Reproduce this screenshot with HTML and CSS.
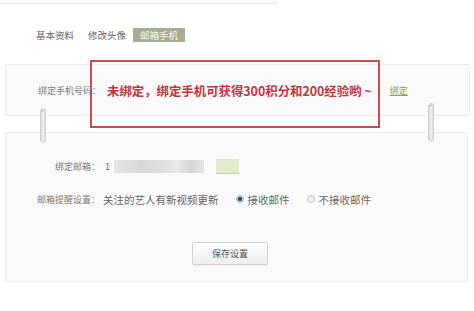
FILE: index.html
```html
<!DOCTYPE html>
<html lang="zh-CN">
<head>
<meta charset="utf-8">
<title>邮箱手机</title>
<link rel="stylesheet" href="styles.css">
</head>
<body>
<div class="topbar"></div>
<div class="tabs">
  <span class="tab">基本资料</span>
  <span class="tab">修改头像</span>
  <span class="tab active">邮箱手机</span>
</div>
<div class="sheet">
  <div class="panel phone">
    <span class="label">绑定手机号码：</span>
    <span class="notice">未绑定，绑定手机可获得300积分和200经验哟 ~</span>
    <a class="bind" href="#">绑定</a>
    <div class="callout"></div>
  </div>
  <div class="hook hook-left">
    <svg width="8" height="36" viewBox="0 0 8 36"><defs><linearGradient id="hg1" x1="0" x2="1" y1="0" y2="0"><stop offset="0" stop-color="#cfcfcf"/><stop offset="0.5" stop-color="#f2f2f2"/><stop offset="1" stop-color="#d6d6d6"/></linearGradient></defs><path d="M1.5 6 Q1.5 1.5 4 1.5 Q6.5 1.5 6.5 4 L6.5 33 Q6.5 35 4 35 Q1.5 35 1.5 33 Z" fill="url(#hg1)" stroke="#c9c9c9" stroke-width="0.8"/><path d="M2.5 5 Q3 2.5 5 3" fill="none" stroke="#aaa" stroke-width="0.8"/></svg>
  </div>
  <div class="hook hook-right">
    <svg width="8" height="40" viewBox="0 0 8 40"><defs><linearGradient id="hg2" x1="0" x2="1" y1="0" y2="0"><stop offset="0" stop-color="#cfcfcf"/><stop offset="0.5" stop-color="#f2f2f2"/><stop offset="1" stop-color="#d6d6d6"/></linearGradient></defs><path d="M1.5 6 Q1.5 1.5 4 1.5 Q6.5 1.5 6.5 4 L6.5 37 Q6.5 39 4 39 Q1.5 39 1.5 37 Z" fill="url(#hg2)" stroke="#c9c9c9" stroke-width="0.8"/><path d="M2.5 5 Q3 2.5 5 3" fill="none" stroke="#aaa" stroke-width="0.8"/></svg>
  </div>
  <div class="panel settings">
    <div class="row email-row">
      <span class="label">绑定邮箱：</span>
      <span class="email"><span class="email-first">1</span><span class="email-blur"></span></span>
      <span class="mini-btn"></span>
    </div>
    <div class="row remind-row">
      <span class="label">邮箱提醒设置：</span>
      <span class="text">关注的艺人有新视频更新</span>
      <span class="radio checked"></span><span class="text opt">接收邮件</span>
      <span class="radio"></span><span class="text opt">不接收邮件</span>
    </div>
    <div class="btn-row">
      <button class="save">保存设置</button>
    </div>
  </div>
</div>
</body>
</html>
```
FILE: styles.css
```css
html, body {
  margin: 0;
  padding: 0;
  background: #ffffff;
  font-family: "Noto Sans CJK SC", "Noto Sans", sans-serif;
  color: #555;
}

.topbar {
  width: 275px;
  height: 3px;
  background: #fafafa;
  border-bottom: 1px solid #e8e8e8;
  border-right: 1px solid #ececec;
}

.tabs {
  display: flex;
  margin-top: 24px;
  padding-left: 29px;
  height: 14px;
}

.tab {
  padding: 0 7px;
  font-size: 9.5px;
  line-height: 14px;
  color: #666;
}

.tab.active {
  background: #a5ad92;
  color: #f4f6ee;
}

.sheet {
  position: relative;
  margin-top: 22px;
}

.panel {
  margin-left: 5px;
  width: 463px;
  background: #fafafa;
  border: 1px solid #ededed;
}

.phone {
  position: relative;
  height: 50px;
  display: flex;
  align-items: center;
  padding-left: 32px;
  box-sizing: content-box;
  width: 431px;
}

.label {
  font-size: 9px;
  color: #7a7a7a;
  white-space: nowrap;
}

.notice {
  margin-left: 6px;
  font-size: 12.4px;
  font-weight: bold;
  color: #c4343d;
  white-space: nowrap;
  position: relative;
  top: 1px;
}

.bind {
  margin-left: 18px;
  font-size: 9px;
  color: #8ea24a;
  text-decoration: underline;
}

.callout {
  position: absolute;
  left: 84px;
  top: -5px;
  width: 290px;
  height: 68px;
  box-sizing: border-box;
  border: 2px solid #c84a52;
}

.hook {
  position: absolute;
  line-height: 0;
}

.hook-left {
  left: 39px;
  top: 43px;
}

.hook-right {
  left: 427px;
  top: 38px;
}

.settings {
  margin-top: 16px;
  height: 148px;
  padding-top: 25px;
  box-sizing: border-box;
  height: 150px;
}

.row {
  display: flex;
  align-items: center;
}

.row .label {
  width: 94px;
  text-align: right;
  flex: none;
}

.email-row {
  height: 16px;
}

.email {
  display: flex;
  align-items: center;
  margin-left: 5px;
}

.email-first {
  font-size: 9px;
  color: #666;
  width: 9px;
}

.email-blur {
  width: 90px;
  height: 13px;
  background: linear-gradient(90deg, #e4e4e4 0%, #d8d8d8 30%, #dedede 55%, #e9e9e9 70%, #d4d4d4 85%, #e6e6e6 100%);
  filter: blur(0.6px);
}

.mini-btn {
  margin-left: 12px;
  width: 23px;
  height: 14px;
  background: #e4ebcc;
  border-bottom: 1px solid #c6d19e;
}

.remind-row {
  margin-top: 17px;
  height: 16px;
}

.text {
  font-size: 10.5px;
  color: #666;
  margin-left: 3px;
  white-space: nowrap;
}

.radio {
  display: inline-block;
  width: 6px;
  height: 6px;
  border-radius: 50%;
  border: 1px solid #c4c4c4;
  background: #f0f0f0;
  margin-left: 17px;
  flex: none;
}

.radio.checked {
  border-color: #9fb4cc;
  background: radial-gradient(circle, #2e4a6a 0 45%, #c9d6e6 55%);
}

.radio + .opt {
  margin-left: 4px;
}

.remind-row .radio:nth-of-type(2) {
  margin-left: 14px;
}

.btn-row {
  margin-top: 31px;
  padding-left: 186px;
}

.save {
  width: 76px;
  height: 23px;
  border: 1px solid #d2d2d2;
  border-radius: 2px;
  background: linear-gradient(#ffffff, #eeeeee);
  font-family: "Noto Sans CJK SC", sans-serif;
  font-size: 9px;
  color: #555;
  padding: 0;
  box-shadow: 0 1px 1px rgba(0,0,0,0.06);
}
```
